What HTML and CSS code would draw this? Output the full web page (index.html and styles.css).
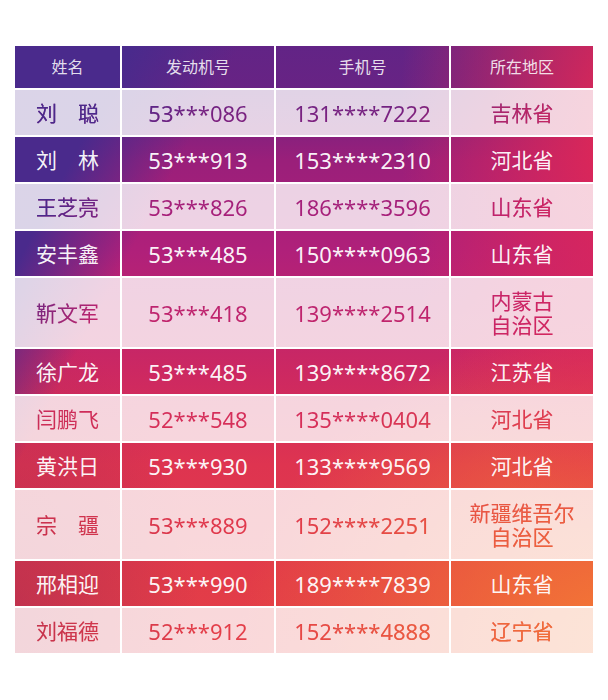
FILE: index.html
```html
<!DOCTYPE html>
<html lang="zh-CN">
<head>
<meta charset="utf-8">
<title>车主信息</title>
<link rel="stylesheet" href="styles.css">
</head>
<body>
<div class="table">
  <div class="row head">
    <div class="c">姓名</div><div class="c">发动机号</div><div class="c">手机号</div><div class="c">所在地区</div>
  </div>
  <div class="row light">
    <div class="c"><span class="t">刘　聪</span></div><div class="c num"><span class="t">53***086</span></div><div class="c num"><span class="t">131****7222</span></div><div class="c"><span class="t">吉林省</span></div>
  </div>
  <div class="row dark">
    <div class="c">刘　林</div><div class="c num">53***913</div><div class="c num">153****2310</div><div class="c">河北省</div>
  </div>
  <div class="row light">
    <div class="c"><span class="t">王芝亮</span></div><div class="c num"><span class="t">53***826</span></div><div class="c num"><span class="t">186****3596</span></div><div class="c"><span class="t">山东省</span></div>
  </div>
  <div class="row dark">
    <div class="c">安丰鑫</div><div class="c num">53***485</div><div class="c num">150****0963</div><div class="c">山东省</div>
  </div>
  <div class="row light">
    <div class="c"><span class="t">靳文军</span></div><div class="c num"><span class="t">53***418</span></div><div class="c num"><span class="t">139****2514</span></div><div class="c"><span class="t">内蒙古<br>自治区</span></div>
  </div>
  <div class="row dark">
    <div class="c">徐广龙</div><div class="c num">53***485</div><div class="c num">139****8672</div><div class="c">江苏省</div>
  </div>
  <div class="row light">
    <div class="c"><span class="t">闫鹏飞</span></div><div class="c num"><span class="t">52***548</span></div><div class="c num"><span class="t">135****0404</span></div><div class="c"><span class="t">河北省</span></div>
  </div>
  <div class="row dark">
    <div class="c">黄洪日</div><div class="c num">53***930</div><div class="c num">133****9569</div><div class="c">河北省</div>
  </div>
  <div class="row light">
    <div class="c"><span class="t">宗　疆</span></div><div class="c num"><span class="t">53***889</span></div><div class="c num"><span class="t">152****2251</span></div><div class="c"><span class="t">新疆维吾尔<br>自治区</span></div>
  </div>
  <div class="row dark">
    <div class="c">邢相迎</div><div class="c num">53***990</div><div class="c num">189****7839</div><div class="c">山东省</div>
  </div>
  <div class="row light">
    <div class="c"><span class="t">刘福德</span></div><div class="c num"><span class="t">52***912</span></div><div class="c num"><span class="t">152****4888</span></div><div class="c"><span class="t">辽宁省</span></div>
  </div>
</div>
</body>
</html>
```

FILE: styles.css
```css
:root {
  --g-right: radial-gradient(ellipse 220px 420px at 620px 120px, rgba(232, 40, 82, 0.95) 0%, rgba(232, 40, 82, 0.5) 50%, rgba(232, 40, 82, 0) 100%);
  --g-orange: radial-gradient(ellipse 380px 320px at 620px 640px, rgba(244, 122, 52, 1) 0%, rgba(244, 122, 52, 0.5) 50%, rgba(244, 122, 52, 0) 100%);
  --g-left: linear-gradient(118deg, rgba(74, 42, 140, 1) 0%, rgba(74, 42, 140, 1) 16%, rgba(74, 42, 140, 0) 27%);
  --g-bl: radial-gradient(ellipse 200px 300px at 0px 620px, rgba(160, 40, 84, 0.55) 0%, rgba(160, 40, 84, 0) 100%);
  --g-base: linear-gradient(180deg, #5c2588 0%, #682384 12.9%, #9a1f7a 22.9%, #b0207a 36%, #cc2862 52.9%, #de3450 66.4%, #e23c48 83.6%, #e6404a 100%);
  --grad: var(--g-right), var(--g-orange), var(--g-left), var(--g-bl), var(--g-base);
}

html, body {
  margin: 0;
  padding: 0;
  background: #ffffff;
}

body {
  font-family: "Noto Sans", "Noto Sans CJK SC", sans-serif;
}

.table {
  margin: 46px 0 0 15px;
  width: 578px;
  display: flex;
  flex-direction: column;
  gap: 2px;
}

.row {
  display: grid;
  grid-template-columns: 105px 152px 173px 142px;
  column-gap: 2px;
}

.c {
  display: flex;
  align-items: center;
  justify-content: center;
  text-align: center;
  padding: 10.5px 0;
  font-size: 21px;
  line-height: 24px;
  background: var(--grad);
  background-attachment: fixed;
}

.num {
  font-size: 22px;
}

.head .c {
  padding: 9px 0;
  font-size: 16px;
  color: rgba(255, 255, 255, 0.86);
}

.dark .c {
  color: rgba(255, 255, 255, 0.96);
}

.light .c {
  background: linear-gradient(rgba(255, 255, 255, 0.8), rgba(255, 255, 255, 0.8)), var(--grad);
  background-attachment: fixed;
}

.t {
  display: inline-block;
  background: var(--grad);
  background-attachment: fixed;
  -webkit-background-clip: text;
  background-clip: text;
  color: transparent;
}
```
